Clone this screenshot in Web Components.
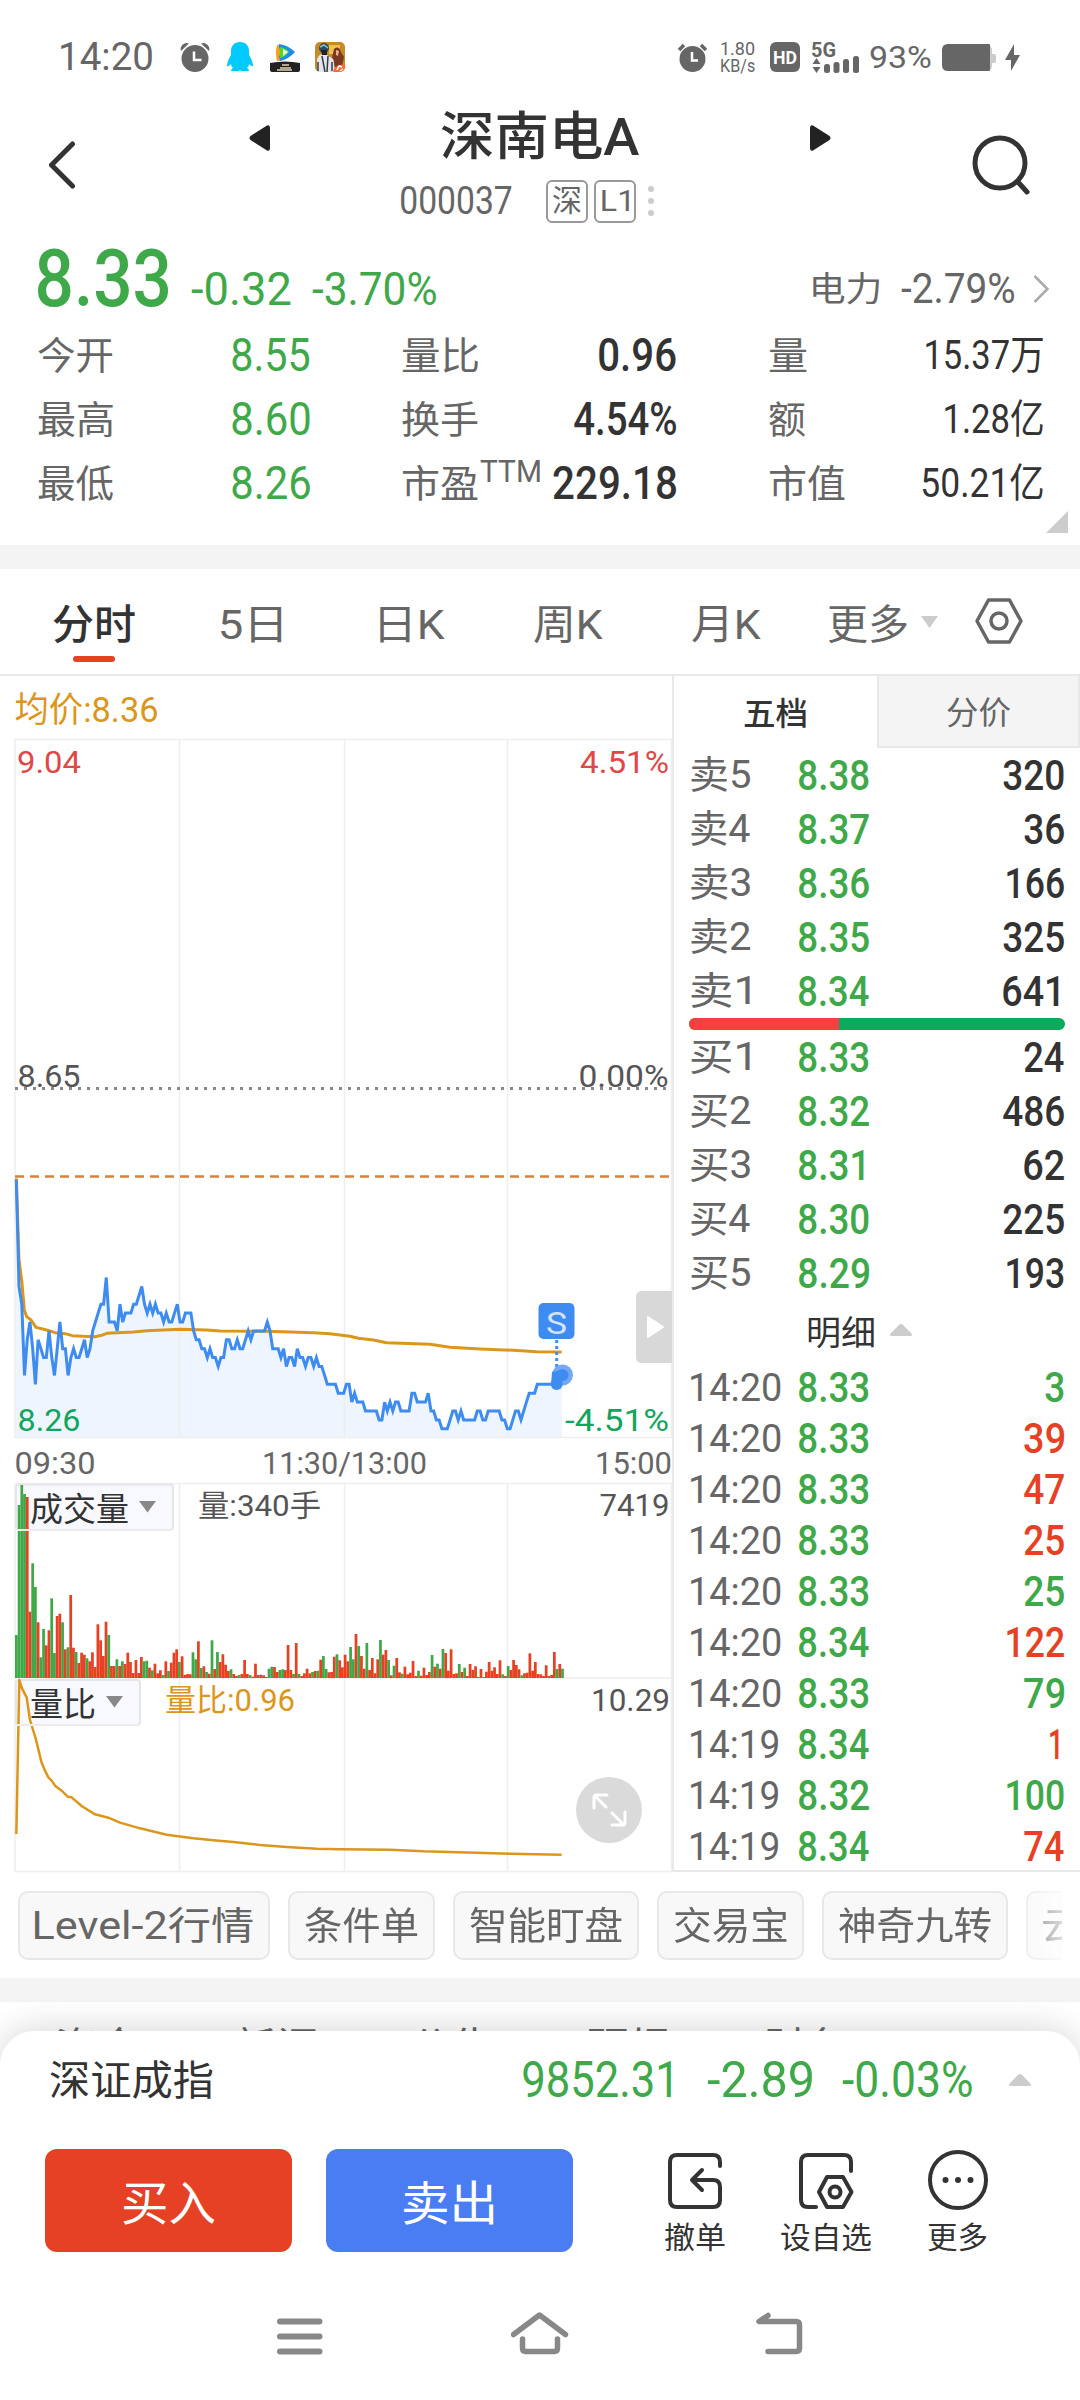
<!DOCTYPE html>
<html lang="zh-CN">
<head>
<meta charset="utf-8">
<title>深南电A 000037</title>
<style>
    html, body {
        margin: 0;
        padding: 0;
    }
    body {
        width: 1080px;
        height: 2400px;
        overflow: hidden;
        background: #ffffff;
        color: #333333;
        font-family: Roboto, "Noto Sans CJK SC", sans-serif;
        --green: #3fa94a;
        --red: #e64124;
        --grey: #666666;
        --line: #e9e9e9;
    }
    main {
        display: flex;
        flex-direction: column;
        height: 2400px;
    }
    .trade {
        display: flex;
        height: 1196px;
        border-top: 2px solid var(--line);
    }
    .gap {
        height: 24px;
        background: #f4f4f4;
    }
</style>
</head>
<body>
<main>
    <status-bar></status-bar>
    <stock-header></stock-header>
    <quote-panel></quote-panel>
    <div class="gap"></div>
    <period-tabs></period-tabs>
    <div class="trade">
        <minute-chart></minute-chart>
        <order-book></order-book>
    </div>
    <tool-chips></tool-chips>
    <div class="gap"></div>
    <info-tabs></info-tabs>
    <trade-sheet></trade-sheet>
    <nav-bar></nav-bar>
</main>

<script>
const ctx = document.createElement('canvas').getContext('2d');

// One line of text, squeezed so that its ink is exactly [w] pixels wide.
class FitText extends HTMLElement {

    constructor() {
        super();

        this.attachShadow({mode: 'open'}).innerHTML = `
            <style>
                :host {
                    display: block;
                    flex: none;
                    line-height: 1.2;
                    white-space: nowrap;
                }
                span {
                    display: inline-block;
                    transform-origin: 0 50%;
                }
            </style>
            <span><slot></slot></span>
        `;
    }

    connectedCallback() {
        const width = Number(this.getAttribute('w'));
        const style = getComputedStyle(this);
        const span = this.shadowRoot.querySelector('span');

        ctx.font = `${style.fontWeight} ${style.fontSize} ${style.fontFamily}`;
        const box = ctx.measureText(this.textContent);
        const ink = box.actualBoundingBoxLeft + box.actualBoundingBoxRight;

        this.style.width = `${width}px`;
        span.style.transform = `scaleX(${width / ink}) translateX(${box.actualBoundingBoxLeft}px)`;
    }
}

customElements.define('fit-text', FitText);

function define(name, markup) {
    customElements.define(name, class extends HTMLElement {
        constructor() {
            super();
            this.attachShadow({mode: 'open'}).innerHTML = markup;
        }
    });
}

define('status-bar', `
    <style>
        :host {
            display: flex;
            justify-content: space-between;
            align-items: center;
            height: 114px;
            padding: 0 60px 0 61px;
            box-sizing: border-box;
            color: var(--grey);
        }
        div {
            display: flex;
            align-items: center;
        }
        svg {
            display: block;
            flex: none;
            overflow: visible;
        }
        .time { font-size: 39px; padding-top: 1px; }
        .rate { font-size: 18px; display: grid; gap: 0; line-height: 17px; }
        .rate fit-text { line-height: 17px; }
        .battery { font-size: 31px; padding-top: 2px; }
    </style>
    <div>
        <fit-text class="time" w="91">14:20</fit-text>
        <svg style="margin-left:28px" width="30" height="30" viewBox="0 0 30 30" fill="#666">
            <circle cx="15" cy="16.500" r="13.500"/>
            <path d="M1 9A6 6 0 0 1 9 1.500ZM29 9A6 6 0 0 0 21 1.500Z"/>
            <path d="M14 9.500v8.500h7.500" fill="none" stroke="#fff" stroke-width="2.500"/>
        </svg>
        <svg style="margin-left:17px" width="26" height="30" viewBox="0 0 26 30" fill="#00cafe">
            <path d="M13 0C7 0 4 4 4 9v4C2 16 0 20 0 24c1 1 3-1 4-2 0 2 1 3 2 4-1 1-2 1-2 3h8l1-1 1 1h8c0-2-1-2-2-3 1-1 2-2 2-4 1 1 3 3 4 2 0-4-2-8-4-11V9c0-5-3-9-9-9Z"/>
        </svg>
        <svg style="margin-left:17px" width="30" height="30" viewBox="0 0 30 30">
            <path d="M7 3q-2 8 0 16l7-1V3Z" fill="#ff9b1a"/>
            <path d="M9 2q9 1 16 8-6 7-15 9l-1-5 5-4-5-4Z" fill="#1c8cf0"/>
            <path d="M10 5q6 1 9 5-4 5-9 6-1-6 0-11Z" fill="#4ddb2a"/>
            <path d="M13 7l5 3-5 4Z" fill="#fff"/>
            <path d="M0 21q15-3 30 0v7q0 2-2 2H2q-2 0-2-2Z" fill="#222"/>
            <path d="M12 23h7M10 26h11M7 28h15" stroke="#e5d2b0" stroke-width="1.500"/>
        </svg>
        <svg style="margin-left:15px" width="30" height="30" viewBox="0 0 30 30">
            <defs><clipPath id="r"><rect width="30" height="30" rx="5"/></clipPath></defs>
            <g clip-path="url(#r)">
                <rect width="30" height="30" fill="#c78a26"/>
                <rect x="14" y="3" width="11" height="9" fill="#f6c050"/>
                <path d="M19 7q5-4 7 3l3 5-2 9-9 1-1-9Z" fill="#7a3a22"/>
                <path d="M21 8l3 1-1 5-2-1Z" fill="#eeb083"/>
                <path d="M2 17q2-5 6-5t7 3q4 1 4 6l1 9H2Z" fill="#e3e5ea"/>
                <path d="M7 14l3 16M13 14l-1 16M3 20v9M17 20v9" stroke="#333a46" stroke-width="1.500"/>
                <circle cx="9" cy="6" r="5" fill="#30485f"/>
                <path d="M5 5l4-2 4 3" stroke="#9db9cf" stroke-width="1.500" fill="none"/>
                <path d="M6 8h6v5H7Z" fill="#1d222b"/>
                <path d="M18 30q1-7 12-8v8Z" fill="#ff6a3a"/>
                <path d="M22 28l2-4 3 1M25 29l3-2" stroke="#fff" stroke-width="1.500" fill="none"/>
            </g>
        </svg>
    </div>
    <div>
        <svg width="29" height="30" viewBox="0 0 29 30" fill="#666">
            <circle cx="14.500" cy="17" r="13"/>
            <path d="M1 8l5-5M28 8l-5-5" stroke="#666" stroke-width="3.500"/>
            <path d="M14 10v8.500h6" fill="none" stroke="#fff" stroke-width="2.500"/>
        </svg>
        <div class="rate" style="margin-left:14px">
            <fit-text w="34">1.80</fit-text>
            <fit-text w="34">KB/s</fit-text>
        </div>
        <svg style="margin-left:15px" width="30" height="30" viewBox="0 0 30 30">
            <rect width="30" height="30" rx="6" fill="#666"/>
            <text x="3" y="22" font-size="19" font-weight="700" fill="#fff" textLength="24" lengthAdjust="spacingAndGlyphs">HD</text>
        </svg>
        <svg style="margin-left:12px" width="47" height="31" viewBox="0 0 47 31" fill="#666">
            <text x="-1" y="14.500" font-size="20" font-weight="700" textLength="25" lengthAdjust="spacingAndGlyphs">5G</text>
            <path d="M0.500 22l4-6 4 6ZM0.500 25l4 6 4-6Z"/>
            <rect x="12" y="22" width="6" height="9" rx="2.500"/>
            <rect x="21.500" y="20" width="6" height="11" rx="2.500"/>
            <rect x="31" y="17" width="6" height="14" rx="2.500"/>
            <rect x="41" y="14" width="6" height="17" rx="2.500"/>
        </svg>
        <fit-text class="battery" style="margin-left:11px" w="61">93%</fit-text>
        <svg style="margin:2px 0 0 11px" width="78" height="28" viewBox="0 0 78 28" fill="#666">
            <rect x="40" y="1" width="10" height="26" rx="5" fill="#ccc"/>
            <rect x="48" y="10" width="6" height="9" rx="2" fill="#ccc"/>
            <path d="M6 0h41q1 0 1 1v25q0 1-1 1H6q-6 0-6-6V6q0-6 6-6Z"/>
            <path d="M72 0l-9 16h6l0 11 9-16h-6Z"/>
        </svg>
    </div>
`);

define('stock-header', `
    <style>
        :host {
            display: grid;
            grid-template-columns: 49px 200px 582px 133px 1fr;
            height: 120px;
        }
        svg { display: block; }
        .centre {
            display: flex;
            flex-direction: column;
        }
        .title {
            display: flex;
            align-items: center;
            height: 48px;
        }
        .title fit-text {
            font-size: 52px;
            font-weight: 500;
            margin: 0 170px 0 171px;
        }
        .code {
            display: flex;
            align-items: center;
            margin: 16px 0 0 152px;
            height: 46px;
            font-size: 39px;
            color: var(--grey);
        }
        .badge {
            display: flex;
            align-items: center;
            justify-content: center;
            box-sizing: border-box;
            width: 42px;
            height: 43px;
            margin-right: 6px;
            border: 2px solid #999999;
            border-radius: 6px;
            font-size: 30px;
        }
    </style>
    <span></span>
    <svg width="27" height="120" viewBox="0 0 27 120" fill="none" stroke="#333" stroke-width="5" stroke-linecap="round" stroke-linejoin="round">
        <path d="M23.500 30L2.500 51l21 21"/>
    </svg>
    <div class="centre">
        <div class="title">
            <svg width="21" height="26" viewBox="0 0 21 26" fill="#222"><path d="M18 0.500q3-1 3 3v19q0 4-3 3L1.500 15q-2-2 0-4Z"/></svg>
            <fit-text w="199">深南电A</fit-text>
            <svg width="21" height="26" viewBox="0 0 21 26" fill="#222"><path d="M3 0.500Q0-0.500 0 3.500v19q0 4 3 3L19.500 15q2-2 0-4Z"/></svg>
        </div>
        <div class="code">
            <fit-text w="111" style="margin-right:34px">000037</fit-text>
            <span class="badge"><fit-text w="28">深</fit-text></span>
            <span class="badge"><fit-text w="27">L1</fit-text></span>
            <svg style="margin-left:6px" width="6" height="32" viewBox="0 0 6 32" fill="#ccc">
                <circle cx="3" cy="4" r="3"/><circle cx="3" cy="16" r="3"/><circle cx="3" cy="28" r="3"/>
            </svg>
        </div>
    </div>
    <span></span>
    <svg width="70" height="120" viewBox="0 0 70 120" fill="none" stroke="#333" stroke-width="5" stroke-linecap="round">
        <circle cx="36" cy="49" r="25"/>
        <path d="M54 68l9 10"/>
    </svg>
`);

const quoteRows = [
    ['今开', '8.55', '量比', '0.96', 77, '量', 38, '15.37万', 117],
    ['最高', '8.60', '换手', '4.54%', 102, '额', 36, '1.28亿', 98],
    ['最低', '8.26', '市盈', '229.18', 123, '市值', 76, '50.21亿', 120]
];

define('quote-panel', `
    <style>
        :host {
            display: block;
            height: 311px;
        }
        .price {
            display: flex;
            align-items: center;
            height: 90px;
            padding: 0 30px 0 38px;
            color: var(--green);
        }
        .now {
            font-size: 80px;
            font-weight: 500;
        }
        .move {
            font-size: 46px;
            padding-top: 21px;
        }
        .sector {
            display: flex;
            align-items: center;
            margin-left: auto;
            padding-top: 20px;
            color: var(--grey);
        }
        .row {
            display: grid;
            grid-template-columns: 194px 80px 90px 274px 93px 274px;
            align-items: center;
            height: 64px;
            padding-left: 38px;
            font-size: 46px;
        }
        .label {
            display: flex;
            padding-top: 2px;
            font-size: 38px;
            color: var(--grey);
        }
        .up { color: var(--green); }
        .mid, .last {
            display: flex;
            align-items: center;
            justify-content: space-between;
        }
        .mid fit-text, .last fit-text { font-weight: 500; }
        .mid .label fit-text, .last .label fit-text { font-weight: 400; }
        .last > fit-text { font-size: 40px; font-weight: 400; }
        .label .ttm {
            font-size: 31px;
            margin: -9px 0 0 2px;
        }
        .corner {
            display: block;
            margin: -5px 12px 0 auto;
        }
    </style>
    <div class="price">
        <fit-text class="now" w="131">8.33</fit-text>
        <fit-text class="move" w="100" style="margin-left:22px">-0.32</fit-text>
        <fit-text class="move" w="124" style="margin-left:21px">-3.70%</fit-text>
        <div class="sector">
            <fit-text w="66" style="font-size:34px">电力</fit-text>
            <fit-text w="113" style="font-size:42px;margin-left:22px">-2.79%</fit-text>
            <svg style="margin-left:19px" width="17" height="28" viewBox="0 0 17 28" fill="none" stroke="#aaa" stroke-width="2.500"><path d="M1.500 1l13 13-13 13"/></svg>
        </div>
    </div>
    ${quoteRows.map((r, i) => `
        <div class="row">
            <div class="label"><fit-text w="75">${r[0]}</fit-text></div>
            <fit-text class="up" w="78">${r[1]}</fit-text>
            <span></span>
            <div class="mid">
                <div class="label"><fit-text w="76">${r[2]}</fit-text>${i === 2 ? '<fit-text class="ttm" w="60">TTM</fit-text>' : ''}</div>
                <fit-text w="${r[4]}">${r[3]}</fit-text>
            </div>
            <span></span>
            <div class="last">
                <div class="label"><fit-text w="${r[6]}">${r[5]}</fit-text></div>
                <fit-text w="${r[8]}">${r[7]}</fit-text>
            </div>
        </div>
    `).join('')}
    <svg class="corner" width="22" height="22" viewBox="0 0 22 22" fill="#ccc"><path d="M22 0v22H0Z"/></svg>
`);

define('period-tabs', `
    <style>
        :host {
            display: grid;
            grid-template-columns: 168px 159px 154px 158px 136px 93px 54px 1fr;
            padding-left: 53px;
            height: 105px;
            font-size: 41px;
            color: var(--grey);
        }
        fit-text { margin-top: 32px; }
        svg { margin-top: 29px; }
        .active { color: #333333; font-weight: 500; }
        .active::after {
            content: "";
            display: block;
            width: 42px;
            height: 6px;
            margin: 6px 0 0 20px;
            border-radius: 3px;
            background: var(--red);
        }
    </style>
    <div class="active"><fit-text w="82">分时</fit-text></div>
    <fit-text w="61">5日</fit-text>
    <fit-text w="65">日K</fit-text>
    <fit-text w="69">周K</fit-text>
    <fit-text w="69">月K</fit-text>
    <fit-text w="79">更多</fit-text>
    <svg style="margin-top:47px" width="18" height="12" viewBox="0 0 18 12" fill="#ccc"><path d="M0 0h17L8.500 12Z"/></svg>
    <svg width="48" height="46" viewBox="0 0 48 46" fill="none" stroke="#666" stroke-width="3.500" stroke-linejoin="round">
        <path d="M13.500 2h21L46 23 34.500 44h-21L2 23Z"/><circle cx="24" cy="23" r="8"/>
    </svg>
`);

// Price of every minute since 09:30, in cents.
const prices = [
    855,843,841,833,837,839,836,832,837,836,835,835,838,835,833,836,839,836,836,833,
    835,836,835,835,836,837,835,836,838,839,840,841,841,844,839,839,839,838,841,839,
    840,840,840,841,841,842,843,841,840,841,840,841,840,840,839,840,839,839,840,841,
    839,839,840,840,840,838,837,837,836,836,835,836,835,835,834,835,835,837,837,836,
    836,837,836,836,837,838,837,838,838,838,838,838,839,838,836,836,836,835,836,834,
    835,835,834,836,835,835,834,835,835,834,835,834,834,833,832,832,832,832,831,831,
    831,832,832,830,831,830,830,830,829,829,829,829,829,828,828,830,829,830,829,830,
    830,829,829,829,829,831,831,830,830,830,830,831,829,829,828,828,827,827,827,828,
    829,829,828,829,828,828,828,828,828,829,829,828,828,829,829,829,829,829,828,828,
    827,827,828,829,829,828,829,830,831,831,831,832,832,832,832,832,832,832,833,833,833
];

// Height of each minute's volume bar in thirds of a pixel; r = rising, g = falling.
const volumes = `129g 519g 579g 552g 543r 199r 344g 273g 167r 62g 147g 98r 143r 239g 75g 186r 193r 167g 86r 92g
    249r 91r 78g 45r 76r 70r 59g 50r 77r 33r 161r 113r 66r 169r 129g 36r 36r 56g 36r 50g
    42r 76r 48r 15r 54r 15r 63r 50g 52g 31r 23g 43r 14r 23r 9g 50r 21g 46r 76r 86r
    48g 65r 9r 12r 11r 77g 56g 110r 30g 35r 18g 13r 113g 27r 78g 48r 71r 40r 21r 26g
    12r 6r 9g 12r 54r 12r 9g 4r 43r 9r 10r 8r 3r 28g 34g 33r 18r 24g 26g 24r
    99r 24r 12g 105r 12g 6r 14r 28r 14r 18g 21r 22g 55r 66g 27g 17r 18r 64r 71g 53r
    32r 70r 50r 93g 56g 132r 96g 66r 28r 105g 24r 60r 14r 56r 114g 70r 84r 54g 8r 37g
    60r 17r 13g 34r 11r 16r 51r 6r 22g 7r 31r 9r 18r 69g 34r 43g 28r 87g 75r 22r
    86r 12r 14r 42g 18r 31g 6r 42r 24r 35r 3r 27r 3g 19r 48r 22r 32r 12r 53r 11g
    6r 36g 24r 54r 39r 26r 8g 14r 16r 74r 22r 48r 12r 11r 6r 38r 6r 9r 78r 27g
    42r 28g`.split(/\s+/);

class MinuteChart extends HTMLElement {

    constructor() {
        super();

        this.attachShadow({mode: 'open'}).innerHTML = `
            <style>
                :host {
                    display: block;
                    flex: none;
                    width: 672px;
                    border-right: 2px solid var(--line);
                }
                svg { display: block; overflow: visible; }
                text { font-size: 32px; }
                .grid { stroke: #eeeeee; stroke-width: 1.500; fill: none; }
                .box { fill: #f8f9fe; stroke: #e6e6e6; stroke-width: 2; }
                .name { fill: #333333; font-size: 33px; }
                .info { fill: #555555; font-size: 31px; }
                .average { stroke: #dc961c; stroke-width: 2.500; fill: none; stroke-linejoin: round; }
            </style>
            <svg width="672" height="1196" viewBox="0 676 672 1196">
                <path id="area" fill="#eef5fe"/>
                <g class="grid">
                    <path d="M15 739.500H672M15 1437.500H672M15 1483.500H672M15 1678H672M15 1871.500H672"/>
                    <path d="M15 739V1438M179.500 739V1438M344.500 739V1438M507.500 739V1438M671.500 739V1438"/>
                    <path d="M15 1484V1872M179.500 1484V1872M344.500 1484V1872M507.500 1484V1872M671.500 1484V1872"/>
                </g>
                <path d="M15 1088.500H671" stroke="#888" stroke-width="3" stroke-dasharray="3 6"/>
                <path d="M15 1176.500H671" stroke="#d9803a" stroke-width="2.500" stroke-dasharray="9 6"/>
                <g transform="translate(0 1100) scale(.33333)">
                    <path class="average" style="stroke-width:9" d="M49 235L57 480L65 540L73 630L80 650L93 660L108 682L140 690L165 698L195 701L217 707L250 709L285 710L305 706L320 700L400 696L440 692L540 688L620 690L660 693L800 694L940 698L990 701L1050 709L1075 715L1120 720L1160 728L1290 733L1350 742L1440 747L1540 751L1610 755L1685 756"/>
                </g>
                <path id="price" fill="none" stroke="#3f8cf0" stroke-width="3"/>
                <text x="14.500" y="721.500" fill="#dc961c" style="font-size:35px" textLength="144" lengthAdjust="spacingAndGlyphs">均价:8.36</text>
                <g fill="#e04848">
                    <text x="17" y="772.500" textLength="64" lengthAdjust="spacingAndGlyphs">9.04</text>
                    <text x="580" y="772.500" textLength="89" lengthAdjust="spacingAndGlyphs">4.51%</text>
                </g>
                <g fill="#555">
                    <text x="17.500" y="1087" textLength="63" lengthAdjust="spacingAndGlyphs">8.65</text>
                    <text x="578.500" y="1087" textLength="90" lengthAdjust="spacingAndGlyphs">0.00%</text>
                </g>
                <g fill="#12a55c">
                    <text x="17.500" y="1431" textLength="63" lengthAdjust="spacingAndGlyphs">8.26</text>
                    <text x="565" y="1431" textLength="104" lengthAdjust="spacingAndGlyphs">-4.51%</text>
                </g>
                <g fill="#666">
                    <text x="14.500" y="1474" textLength="81" lengthAdjust="spacingAndGlyphs">09:30</text>
                    <text x="262" y="1474" textLength="165" lengthAdjust="spacingAndGlyphs">11:30/13:00</text>
                    <text x="595" y="1474" textLength="77" lengthAdjust="spacingAndGlyphs">15:00</text>
                </g>

                <path d="M556.700 1340v27" stroke="#3f8cf0" stroke-width="3" stroke-dasharray="3 3"/>
                <circle cx="562.500" cy="1375" r="10.500" fill="#75a8f4"/>
                <circle cx="562.500" cy="1375" r="6" fill="#3f8cf0"/>
                <path d="M552 1372l10-2v8l-1 8q-4 6-10-1Z" fill="#3f8cf0"/>
                <circle cx="556.700" cy="1384" r="6" fill="#3f8cf0"/>
                <rect x="538.500" y="1303" width="36" height="36" rx="5" fill="#3f8cf0"/>
                <text x="546" y="1334" fill="#d3e3fb" textLength="21" lengthAdjust="spacingAndGlyphs">S</text>
                <path d="M672 1291h-30q-6 0-6 6v60q0 6 6 6h30Z" fill="#d8d8d8"/>
                <path d="M648 1317l15 10-15 10Z" fill="#fff" stroke="#fff" stroke-width="2" stroke-linejoin="round"/>

                <rect class="box" x="16" y="1484.500" width="157" height="45.500" rx="3"/>
                <rect class="box" x="16" y="1680" width="124" height="45" rx="3"/>
                <g id="bars"></g>
                <g transform="translate(0 1460) scale(.33333)">
                    <path class="average" style="stroke-width:7.500" d="M49 1122L58 660L66 685L80 712L90 780L107 835L124 905L135 932L145 952L155 962L165 977L185 992L203 1010L215 1012L245 1038L285 1063L325 1073L360 1088L420 1105L500 1124L580 1135L640 1141L700 1146L780 1155L860 1161L950 1166L1020 1168L1170 1169L1270 1174L1530 1181L1685 1184"/>
                </g>
                <path d="M17 1530H172M17 1725H139" stroke="#ececec" stroke-width="2"/>
                <text class="name" x="30" y="1521" textLength="99" lengthAdjust="spacingAndGlyphs">成交量</text>
                <path d="M139 1501h17l-8.500 11.500Z" fill="#888"/>
                <text class="info" x="198" y="1516" style="font-size:30px" textLength="123" lengthAdjust="spacingAndGlyphs">量:340手</text>
                <text class="info" x="599.500" y="1516" textLength="70" lengthAdjust="spacingAndGlyphs">7419</text>
                <text class="name" x="30" y="1715.500" textLength="66" lengthAdjust="spacingAndGlyphs">量比</text>
                <path d="M106 1696h17l-8.500 11.500Z" fill="#888"/>
                <text class="info" x="165" y="1711" style="fill:#dc961c;font-size:31px" textLength="130" lengthAdjust="spacingAndGlyphs">量比:0.96</text>
                <text class="info" x="591" y="1711" textLength="79" lengthAdjust="spacingAndGlyphs">10.29</text>

                <circle cx="609" cy="1810" r="33" fill="#dadada"/>
                <path d="M594 1808v-10q0-3 3-3h10M595 1796l11 11M612 1813l12 12M625 1812v10q0 3-3 3h-10" fill="none" stroke="#fff" stroke-width="3" stroke-linecap="round"/>
            </svg>
        `;
    }

    connectedCallback() {
        const points = prices.map((p, i) => `${(16.3 + i * 2.728).toFixed(1)} ${(1437.7 - (p - 826) * 8.9).toFixed(1)}`);
        const line = `M${points.join('L')}`;

        this.shadowRoot.querySelector('#price').setAttribute('d', line);
        this.shadowRoot.querySelector('#area').setAttribute('d', `${line}V1437H16Z`);
        this.shadowRoot.querySelector('#bars').innerHTML = volumes.map((v, i) => {
            const height = parseInt(v, 10) / 3;
            const fill = v.endsWith('r') ? '#e64124' : '#3fa94a';
            return `<rect x="${(15 + i * 2.717).toFixed(2)}" y="${(1678 - height).toFixed(1)}" width="2.75" height="${height.toFixed(1)}" fill="${fill}"/>`;
        }).join('');
    }
}

customElements.define('minute-chart', MinuteChart);

const sells = [['卖5', '8.38', '320'], ['卖4', '8.37', '36'], ['卖3', '8.36', '166'], ['卖2', '8.35', '325'], ['卖1', '8.34', '641']];
const buys = [['买1', '8.33', '24'], ['买2', '8.32', '486'], ['买3', '8.31', '62'], ['买4', '8.30', '225'], ['买5', '8.29', '193']];
const deals = [
    ['14:20', '8.33', '3', 'g'], ['14:20', '8.33', '39', 'r'], ['14:20', '8.33', '47', 'r'], ['14:20', '8.33', '25', 'r'],
    ['14:20', '8.33', '25', 'g'], ['14:20', '8.34', '122', 'r'], ['14:20', '8.33', '79', 'g'], ['14:19', '8.34', '1', 'r'],
    ['14:19', '8.32', '100', 'g'], ['14:19', '8.34', '74', 'r']
];

function digitsWidth(text) {
    // a leading 1 is narrower than the other figures
    return text === '1' ? 9 : text.length * 21 - 2 - (text[0] === '1' ? 4 : 0);
}

function bookRow([label, price, count, side = ''], labelWidth) {
    const nudge = count.endsWith('1') ? 5 : 0;
    return `
        <div class="row">
            <fit-text class="label" w="${labelWidth}">${label}</fit-text>
            <fit-text class="price" w="${price.endsWith('1') ? 65 : 70}">${price}</fit-text>
            <fit-text class="count ${side}" w="${digitsWidth(count) - (count.length > 1 ? nudge : 0)}" style="margin-right:${nudge}px">${count}</fit-text>
        </div>
    `;
}

define('order-book', `
    <style>
        :host {
            display: block;
            flex: 1;
            border-bottom: 2px solid var(--line);
            box-sizing: border-box;
            height: 1196px;
        }
        .tabs {
            display: grid;
            grid-template-columns: 203px 1fr;
            height: 72px;
            margin-bottom: 1px;
            font-size: 32px;
        }
        .tabs div {
            display: flex;
            align-items: center;
            justify-content: center;
            padding-top: 5px;
        }
        .tabs .on {
            padding-right: 2px;
            font-weight: 500;
        }
        .tabs .off {
            border: 2px solid #e8e8e8;
            border-top: 0;
            background: #f4f4f4;
            color: var(--grey);
        }
        .row {
            display: grid;
            grid-template-columns: 108px 1fr auto;
            align-items: center;
            height: 54px;
            padding: 0 16px 0 17px;
            font-size: 43px;
            font-weight: 500;
        }
        .deals .row { height: 51px; }
        .deals .label { padding-top: 2px; }
        .label {
            font-size: 38px;
            font-weight: 400;
            color: var(--grey);
        }
        .price, .g { color: var(--green); }
        .r { color: var(--red); }
        .ratio {
            display: flex;
            height: 12px;
            margin: -1px 15px 1px;
            border-radius: 6px;
            overflow: hidden;
            background: #0caa5c;
        }
        .ratio i { width: 150px; background: #f63f3f; }
        .head {
            display: flex;
            align-items: center;
            height: 61px;
            padding: 0 0 0 134px;
            font-size: 34px;
        }
        .head fit-text { padding-top: 3px; }
    </style>
    <div class="tabs">
        <div class="on"><fit-text w="62">五档</fit-text></div>
        <div class="off"><fit-text w="64">分价</fit-text></div>
    </div>
    ${sells.map(r => bookRow(r, 59)).join('')}
    <div class="ratio"><i></i></div>
    ${buys.map(r => bookRow(r, 59)).join('')}
    <div class="head">
        <fit-text w="66">明细</fit-text>
        <svg style="margin:-4px 0 0 16px" width="22" height="12" viewBox="0 0 22 12" fill="#ccc"><path d="M1 12q-2-1 0-3l8-8q2-2 4 0l8 8q2 2 0 3Z"/></svg>
    </div>
    <div class="deals">${deals.map(r => bookRow(r, r[0] === '14:20' ? 90 : 87)).join('')}</div>
`);

define('tool-chips', `
    <style>
        :host {
            display: flex;
            gap: 18px;
            box-sizing: border-box;
            width: 1062px;
            height: 106px;
            padding: 19px 0 0 18px;
            overflow: hidden;
            font-size: 38px;
            color: var(--grey);
            -webkit-mask-image: linear-gradient(to right, #000 1005px, transparent 1080px);
        }
        span {
            display: flex;
            align-items: center;
            flex: none;
            box-sizing: border-box;
            height: 69px;
            padding: 3px 15px 0;
            border: 2px solid #e8e8e8;
            border-radius: 10px;
            background: #f8f8f8;
        }
    </style>
    <span><fit-text w="218">Level-2行情</fit-text></span>
    <span><fit-text w="113">条件单</fit-text></span>
    <span><fit-text w="152">智能盯盘</fit-text></span>
    <span><fit-text w="113">交易宝</fit-text></span>
    <span><fit-text w="152">神奇九转</fit-text></span>
    <span><fit-text w="36">云</fit-text></span>
`);

define('info-tabs', `
    <style>
        :host {
            display: flex;
            gap: 95px;
            height: 29px;
            padding: 0 57px;
            overflow: hidden;
            font-size: 41px;
            color: var(--grey);
        }
        fit-text { margin-top: 22px; }
    </style>
    <fit-text w="82">资金</fit-text>
    <fit-text w="82">新闻</fit-text>
    <fit-text w="82">公告</fit-text>
    <fit-text w="82">研报</fit-text>
    <fit-text w="82">财务</fit-text>
`);

define('trade-sheet', `
    <style>
        :host {
            display: block;
            position: relative;
            height: 249px;
            border-radius: 34px 34px 0 0;
            background: #ffffff;
            box-shadow: 0 -2px 34px rgba(0, 0, 0, 0.16);
        }
        .index {
            display: flex;
            align-items: center;
            height: 98px;
            padding: 0 49px 0 50px;
            font-size: 41px;
        }
        .name { padding-top: 3px; }
        .figure {
            font-size: 50px;
            color: var(--green);
        }
        .actions {
            display: flex;
            padding: 20px 0 0 45px;
        }
        .button {
            display: flex;
            align-items: center;
            justify-content: center;
            width: 247px;
            height: 103px;
            margin-right: 34px;
            padding-top: 7px;
            box-sizing: border-box;
            border-radius: 12px;
            color: #ffffff;
            font-size: 47px;
        }
        .buy { background: #e64124; }
        .sell { background: #4a7df2; padding-right: 2px; }
        .tool {
            display: flex;
            flex-direction: column;
            align-items: center;
            width: 131px;
            font-size: 30px;
        }
        .tool svg { height: 62px; margin-bottom: 9px; }
    </style>
    <div class="index">
        <fit-text class="name" w="163">深证成指</fit-text>
        <fit-text class="figure" w="148" style="margin-left:auto">9852.31</fit-text>
        <fit-text class="figure" w="105" style="margin-left:36px">-2.89</fit-text>
        <fit-text class="figure" w="130" style="margin-left:30px">-0.03%</fit-text>
        <svg style="margin-left:37px" width="22" height="12" viewBox="0 0 22 12" fill="#ccc"><path d="M1 12q-2-1 0-3l8-8q2-2 4 0l8 8q2 2 0 3Z"/></svg>
    </div>
    <div class="actions">
        <div class="button buy"><fit-text w="92">买入</fit-text></div>
        <div class="button sell"><fit-text w="90">卖出</fit-text></div>
        <div class="tool" style="margin-left:22px">
            <svg width="56" height="62" viewBox="0 0 56 62" fill="none" stroke="#333" stroke-width="4" stroke-linecap="round" stroke-linejoin="round">
                <path d="M53 17v-4q0-7-7-7H10q-7 0-7 7v38q0 7 7 7h36q7 0 7-7V38q0-7-7-7H25M35 21L25 31l10 10"/>
            </svg>
            <fit-text w="60">撤单</fit-text>
        </div>
        <div class="tool">
            <svg width="56" height="62" viewBox="0 0 56 62" fill="none" stroke="#333" stroke-width="4" stroke-linecap="round" stroke-linejoin="round">
                <path d="M53 22v-9q0-7-7-7H10q-7 0-7 7v38q0 7 7 7h8"/>
                <path d="M29 28h16l8.500 15L45 58H29l-8-15Z"/>
                <circle cx="37" cy="43" r="5.500"/>
            </svg>
            <fit-text w="90">设自选</fit-text>
        </div>
        <div class="tool" style="margin-left:1px">
            <svg width="62" height="62" viewBox="0 0 62 62" fill="#333">
                <circle cx="31" cy="31" r="28" fill="none" stroke="#333" stroke-width="4"/>
                <circle cx="18.500" cy="31" r="3"/><circle cx="31" cy="31" r="3"/><circle cx="43.500" cy="31" r="3"/>
            </svg>
            <fit-text w="59">更多</fit-text>
        </div>
    </div>
`);

define('nav-bar', `
    <style>
        :host {
            display: grid;
            grid-template-columns: 234px 245px 1fr;
            flex: 1;
            padding: 30px 0 0 277px;
            background: #ffffff;
            position: relative;
        }
    </style>
    <svg width="46" height="46" viewBox="0 0 46 46" stroke="#888" stroke-width="6" stroke-linecap="round"><path d="M3 11.500h39.500M3 26.500h39.500M3 41.500h39.500"/></svg>
    <svg width="58" height="46" viewBox="0 0 58 46" fill="none" stroke="#888" stroke-width="5.500" stroke-linecap="round" stroke-linejoin="round">
        <path d="M2.500 24.500L28.500 5l26 19.500M11.500 29v9q0 3.500 3.500 3.500h28q3.500 0 3.500-3.500v-9"/>
    </svg>
    <svg width="48" height="46" viewBox="0 0 48 46" fill="none" stroke="#888" stroke-width="5.500" stroke-linecap="round" stroke-linejoin="round">
        <path d="M12 5.500L3 11.500h37q3.500 0 3.500 3.500v23q0 3.500-3.500 3.500H12"/>
    </svg>
`);
</script>
</body>
</html>
